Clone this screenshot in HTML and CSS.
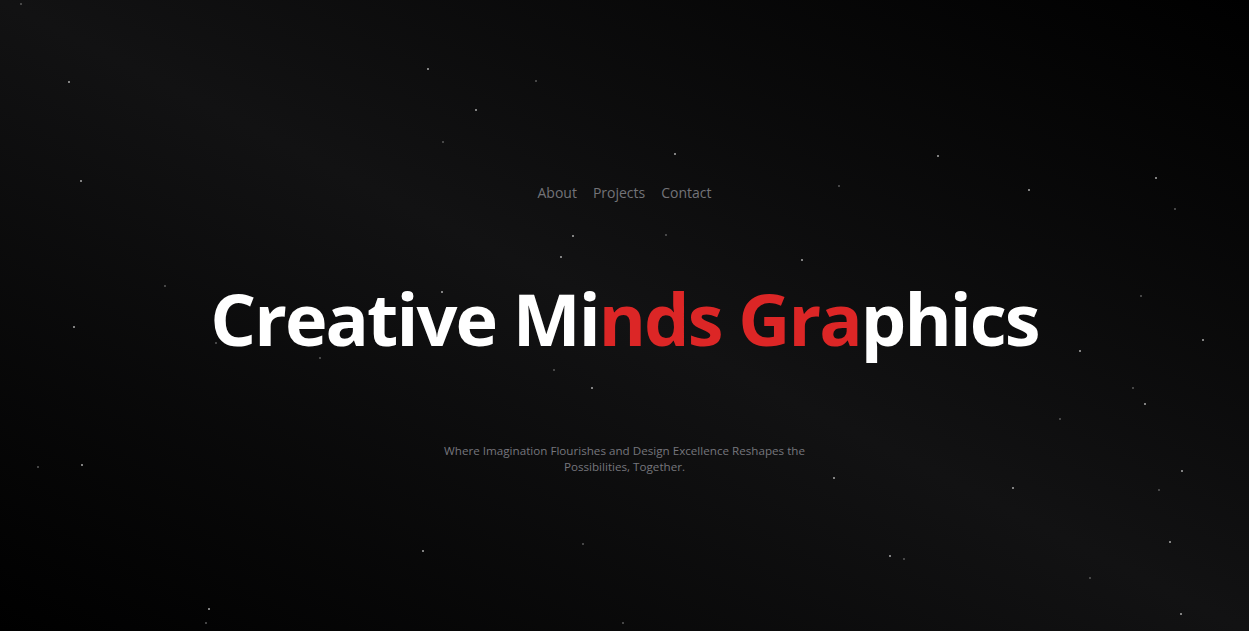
FILE: index.html
```html
<!DOCTYPE html>
<html lang="en">
<head>
<meta charset="utf-8">
<title>Creative Minds Graphics</title>
<link rel="stylesheet" href="styles.css">
</head>
<body>
<div class="page">
  <div class="stars" aria-hidden="true">
    <span class="star dim" style="left:20px;top:3px"></span>
    <span class="star" style="left:68px;top:81px"></span>
    <span class="star" style="left:427px;top:68px"></span>
    <span class="star dim" style="left:535px;top:80px"></span>
    <span class="star" style="left:475px;top:109px"></span>
    <span class="star dim" style="left:442px;top:141px"></span>
    <span class="star" style="left:674px;top:153px"></span>
    <span class="star" style="left:937px;top:155px"></span>
    <span class="star" style="left:80px;top:180px"></span>
    <span class="star dim" style="left:838px;top:185px"></span>
    <span class="star" style="left:1028px;top:189px"></span>
    <span class="star" style="left:1155px;top:177px"></span>
    <span class="star dim" style="left:1174px;top:208px"></span>
    <span class="star" style="left:572px;top:235px"></span>
    <span class="star dim" style="left:665px;top:234px"></span>
    <span class="star" style="left:560px;top:256px"></span>
    <span class="star" style="left:801px;top:259px"></span>
    <span class="star dim" style="left:164px;top:285px"></span>
    <span class="star" style="left:441px;top:291px"></span>
    <span class="star dim" style="left:1140px;top:295px"></span>
    <span class="star" style="left:73px;top:326px"></span>
    <span class="star dim" style="left:215px;top:342px"></span>
    <span class="star" style="left:1202px;top:339px"></span>
    <span class="star" style="left:1079px;top:350px"></span>
    <span class="star dim" style="left:319px;top:357px"></span>
    <span class="star dim" style="left:553px;top:369px"></span>
    <span class="star" style="left:591px;top:387px"></span>
    <span class="star dim" style="left:1132px;top:387px"></span>
    <span class="star" style="left:1144px;top:403px"></span>
    <span class="star dim" style="left:1059px;top:418px"></span>
    <span class="star dim" style="left:37px;top:466px"></span>
    <span class="star" style="left:81px;top:464px"></span>
    <span class="star" style="left:1181px;top:470px"></span>
    <span class="star" style="left:833px;top:477px"></span>
    <span class="star" style="left:1012px;top:487px"></span>
    <span class="star dim" style="left:1158px;top:489px"></span>
    <span class="star dim" style="left:582px;top:543px"></span>
    <span class="star" style="left:422px;top:550px"></span>
    <span class="star" style="left:1169px;top:541px"></span>
    <span class="star" style="left:889px;top:555px"></span>
    <span class="star dim" style="left:903px;top:558px"></span>
    <span class="star dim" style="left:1089px;top:577px"></span>
    <span class="star" style="left:208px;top:608px"></span>
    <span class="star dim" style="left:205px;top:622px"></span>
    <span class="star" style="left:1180px;top:613px"></span>
    <span class="star dim" style="left:622px;top:622px"></span>
  </div>

  <nav class="nav">
    <ul class="nav-list">
      <li><a href="#about">About</a></li>
      <li><a href="#projects">Projects</a></li>
      <li><a href="#contact">Contact</a></li>
    </ul>
  </nav>

  <h1 class="title">Creative Mi<span class="accent">nds Gra</span>phics</h1>

  <p class="tagline">Where Imagination Flourishes and Design Excellence Reshapes the Possibilities, Together.</p>
</div>
</body>
</html>
```

FILE: styles.css
```css
* { box-sizing: border-box; }

html, body {
  margin: 0;
  padding: 0;
  height: 100%;
}

body {
  background: #000;
  font-family: "Open Sans", "Noto Sans", sans-serif;
  overflow: hidden;
}

.page {
  position: relative;
  width: 100vw;
  height: 100vh;
  overflow: hidden;
  display: flex;
  flex-direction: column;
  align-items: center;
  justify-content: center;
  padding-top: 25px;
  background: linear-gradient(to top right, #000 0%, #121213 50%, #000 100%);
}

.stars {
  position: absolute;
  inset: 0;
  pointer-events: none;
}

.star {
  position: absolute;
  width: 2px;
  height: 2px;
  background: #a8a8a8;
  border-radius: 1px;
}

.star.dim {
  background: #5a5a5a;
}

.nav {
  position: relative;
  margin-bottom: 79px;
}

.nav-list {
  display: flex;
  gap: 16px;
  list-style: none;
  margin: 0;
  padding: 0;
}

.nav-list a {
  font-size: 14px;
  line-height: 20px;
  color: #737378;
  text-decoration: none;
}

.title {
  position: relative;
  margin: 0;
  font-size: 72px;
  line-height: 1;
  font-weight: 700;
  letter-spacing: -1.95px;
  color: #fff;
  white-space: nowrap;
}

.accent {
  color: #dc2626;
}

.tagline {
  position: relative;
  margin: 89px 0 0;
  max-width: 384px;
  font-size: 11.65px;
  line-height: 16px;
  color: #76767d;
  text-align: center;
}
```
